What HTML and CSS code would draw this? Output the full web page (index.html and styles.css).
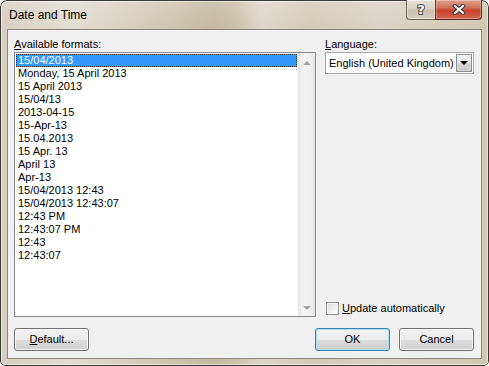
FILE: index.html
```html
<!DOCTYPE html>
<html>
<head>
<meta charset="utf-8">
<title>Date and Time</title>
<link rel="stylesheet" href="styles.css">
</head>
<body>
<div class="window">
  <div class="titlebar">
    <span class="title">Date and Time</span>
    <div class="caption-btns">
      <div class="cap help"><span class="qmark">?</span></div>
      <div class="cap close">
        <svg width="14" height="11" viewBox="0 0 14 11">
          <path d="M3 2 L11 9 M11 2 L3 9" stroke="#3a3a3a" stroke-width="4.2" stroke-linecap="square" fill="none"/>
          <path d="M3 2 L11 9 M11 2 L3 9" stroke="#ffffff" stroke-width="2.2" stroke-linecap="square" fill="none"/>
        </svg>
      </div>
    </div>
  </div>
  <div class="client">
    <div class="main">
      <div class="col-left">
        <div class="label"><u>A</u>vailable formats:</div>
        <div class="listbox">
          <ul class="items">
            <li class="item sel">15/04/2013</li>
            <li class="item">Monday, 15 April 2013</li>
            <li class="item">15 April 2013</li>
            <li class="item">15/04/13</li>
            <li class="item">2013-04-15</li>
            <li class="item">15-Apr-13</li>
            <li class="item">15.04.2013</li>
            <li class="item">15 Apr. 13</li>
            <li class="item">April 13</li>
            <li class="item">Apr-13</li>
            <li class="item">15/04/2013 12:43</li>
            <li class="item">15/04/2013 12:43:07</li>
            <li class="item">12:43 PM</li>
            <li class="item">12:43:07 PM</li>
            <li class="item">12:43</li>
            <li class="item">12:43:07</li>
          </ul>
          <div class="scrollbar">
            <div class="sb-btn"><span class="tri-up"></span></div>
            <div class="sb-track"></div>
            <div class="sb-btn"><span class="tri-down"></span></div>
          </div>
        </div>
      </div>
      <div class="col-right">
        <div class="label"><u>L</u>anguage:</div>
        <div class="combo">
          <span class="combo-text">English (United Kingdom)</span>
          <span class="combo-drop"><span class="tri-black"></span></span>
        </div>
        <div class="check">
          <span class="box"></span>
          <span class="check-text"><u>U</u>pdate automatically</span>
        </div>
      </div>
    </div>
    <div class="buttons">
      <div class="btn"><span><u>D</u>efault...</span></div>
      <div class="btn-group">
        <div class="btn default"><span>OK</span></div>
        <div class="btn"><span>Cancel</span></div>
      </div>
    </div>
  </div>
</div>
</body>
</html>
```

FILE: styles.css
```css
html, body {
  margin: 0;
  padding: 0;
  background: #ffffff;
}
body {
  font-family: "Liberation Sans", Arial, sans-serif;
  font-size: 11px;
  color: #000;
}
.window {
  width: 489px;
  height: 366px;
  box-sizing: border-box;
  padding: 0 7px;
  border-radius: 7px 7px 5px 5px;
  background:
    linear-gradient(180deg, rgba(255,255,255,0.18) 0, rgba(255,255,255,0) 30px),
    linear-gradient(90deg, #d6cfbf 0, #e2ddd1 70px, #d6cfbd 130px, #c2b89d 215px, #c9c0a7 235px, #ddd7c9 262px, #d2cab5 310px, #d9d3c4 380px, #cfc7b1 489px);
  box-shadow: inset 0 0 0 1px #3a3a3a, inset 0 0 0 2px rgba(255,255,255,0.55);
  display: flex;
  flex-direction: column;
}
.titlebar {
  height: 29px;
  display: flex;
  align-items: flex-start;
}
.title {
  font-size: 12px;
  margin: 9px 0 0 2px;
  line-height: 12px;
  color: #000;
}
.caption-btns {
  margin-left: auto;
  display: flex;
}
.cap {
  height: 20px;
  box-sizing: border-box;
  display: flex;
  align-items: center;
  justify-content: center;
  border: 1px solid #6b6558;
  border-top: none;
}
.help {
  width: 29px;
  border-right: none;
  border-radius: 0 0 0 4px;
  background: linear-gradient(180deg, #e6e1d6 0, #d8d2c4 45%, #c8c0ad 55%, #d6d0c2 100%);
  box-shadow: inset 0 0 0 1px rgba(255,255,255,0.45);
}
.qmark {
  font-family: "DejaVu Sans", sans-serif;
  font-weight: bold;
  font-size: 13px;
  line-height: 13px;
  color: #ffffff;
  -webkit-text-stroke: 2px #4a4a4a;
  paint-order: stroke fill;
  margin-top: -1px;
}
.close {
  width: 47px;
  border-color: #5e2a22;
  border-radius: 0 0 4px 0;
  background: linear-gradient(180deg, #e0a18f 0, #d0705b 40%, #c7432c 55%, #d4674e 100%);
  box-shadow: inset 0 0 0 1px rgba(255,255,255,0.3);
}
.client {
  height: 330px;
  box-sizing: border-box;
  border: 1px solid #8a877e;
  background: #f0f0f0;
  padding: 8px 7px 7px 6px;
  display: flex;
  flex-direction: column;
}
.main {
  display: flex;
  gap: 9px;
  height: 279px;
}
.col-left {
  width: 302px;
  display: flex;
  flex-direction: column;
}
.col-right {
  width: 149px;
  display: flex;
  flex-direction: column;
}
.label {
  height: 13px;
  line-height: 13px;
  margin-bottom: 1px;
  white-space: nowrap;
}
.listbox {
  height: 265px;
  box-sizing: border-box;
  border: 1px solid #828790;
  background: #fff;
  display: flex;
}
.items {
  flex: 1;
  list-style: none;
  margin: 0;
  padding: 1px 1px 0 1px;
}
.item {
  height: 13px;
  line-height: 13px;
  padding-left: 2px;
  white-space: nowrap;
}
.item.sel {
  background: #3399ff;
  color: #fff;
  outline: 1px dotted #2a2a2a;
  outline-offset: -1px;
}
.scrollbar {
  width: 17px;
  display: flex;
  flex-direction: column;
  background: linear-gradient(90deg, #e2e2e2 0, #ececec 2px, #f3f3f3 7px, #eeeeee 14px, #e5e5e5 17px);
}
.sb-btn {
  height: 17px;
  display: flex;
  align-items: center;
  justify-content: center;
}
.sb-track {
  flex: 1;
}
.tri-up {
  width: 0;
  height: 0;
  border-left: 4px solid transparent;
  border-right: 4px solid transparent;
  border-bottom: 4px solid #a3a3a3;
  margin-top: 3px;
}
.tri-down {
  width: 0;
  height: 0;
  border-left: 4px solid transparent;
  border-right: 4px solid transparent;
  border-top: 4px solid #a3a3a3;
}
.combo {
  height: 22px;
  box-sizing: border-box;
  border: 1px solid #a4a7ad;
  background: #fff;
  display: flex;
  align-items: center;
  padding: 1px;
}
.combo-text {
  flex: 1;
  padding-left: 2px;
  white-space: nowrap;
}
.combo-drop {
  width: 16px;
  height: 18px;
  box-sizing: border-box;
  border: 1px solid #8d8d8d;
  background: linear-gradient(180deg, #f3f3f3 0, #e6e6e6 50%, #d6d6d6 51%, #c9c9c9 100%);
  display: flex;
  align-items: center;
  justify-content: center;
}
.tri-black {
  width: 0;
  height: 0;
  border-left: 4px solid transparent;
  border-right: 4px solid transparent;
  border-top: 4px solid #000;
}
.check {
  margin-top: auto;
  margin-bottom: 2px;
  display: flex;
  align-items: center;
  gap: 3px;
  padding-left: 1px;
}
.box {
  width: 13px;
  height: 13px;
  box-sizing: border-box;
  border: 1px solid #8e8f8f;
  background: linear-gradient(135deg, #dcdcdc 0, #f2f2f2 60%, #ffffff 100%);
  box-shadow: inset 0 0 0 1px #f4f4f4;
}
.check-text {
  line-height: 13px;
  white-space: nowrap;
}
.buttons {
  margin-top: 11px;
  height: 23px;
  display: flex;
}
.btn-group {
  margin-left: auto;
  display: flex;
  gap: 9px;
}
.btn {
  width: 75px;
  height: 23px;
  box-sizing: border-box;
  border: 1px solid #707070;
  border-radius: 3px;
  background: linear-gradient(180deg, #f2f2f2 0, #ebebeb 50%, #dddddd 51%, #cfcfcf 100%);
  box-shadow: inset 0 0 0 1px rgba(255,255,255,0.75);
  display: flex;
  align-items: center;
  justify-content: center;
  line-height: 13px;
}
.btn.default {
  border-color: #3c7fb1;
  box-shadow: inset 0 0 0 1px #a6e1f7;
}
```
